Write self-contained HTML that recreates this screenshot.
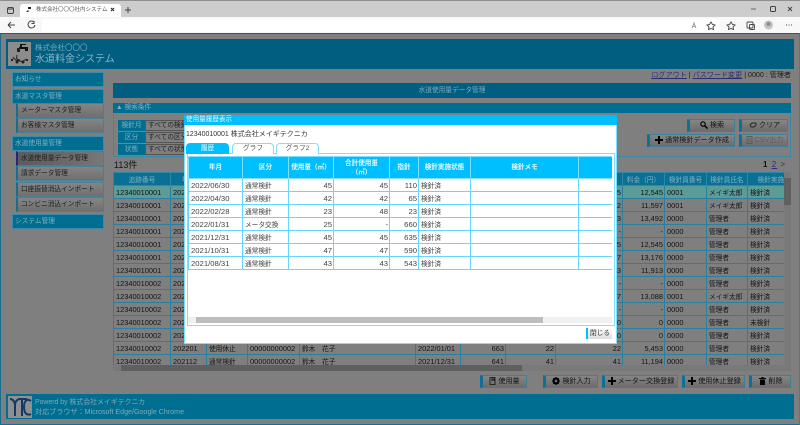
<!DOCTYPE html>
<html lang="ja"><head><meta charset="utf-8"><title>水道料金システム</title>
<style>
*{box-sizing:border-box}
html,body{margin:0;padding:0}
body{width:800px;height:425px;overflow:hidden;position:relative;background:#7f7f7f;font-family:"Liberation Sans","Noto Sans CJK JP",sans-serif;font-size:6.7px;color:#111}
.a{position:absolute;white-space:nowrap}
.m{background:#006e91;color:#84afbf;border:1px solid #3f8aa6;line-height:13px;padding-left:2px;font-size:6.7px}
.s{left:16px;width:88px;height:15px;background:linear-gradient(#858585,#6f6f6f);border:1px solid #4b8094;border-left:2px solid #1c6c8e;line-height:13px;padding-left:3px;color:#1c1c1c}
.b{height:13px;background:linear-gradient(#858585,#6c6c6c);border:1px solid #3f7f9a;border-left:3px solid #0f7096;line-height:11px;text-align:center;color:#151515;font-size:7.1px}
.b svg{vertical-align:-1.500px;margin-right:2px}
.lab{left:118px;width:27px;height:11px;background:#006e91;color:#84afbf;text-align:center;line-height:11px}
.inp{left:145px;width:42px;height:11px;background:#7f7f7f;border:1px solid #555;line-height:9px;padding-left:2px;overflow:hidden;color:#222}
table{border-collapse:collapse;table-layout:fixed}
#mt{position:absolute;left:0;top:0;width:694px}
#mt th{height:13px;background:#0a7096;color:#84afbf;font-weight:400;border:1px solid #2f86a6;font-size:6.7px;padding:0;overflow:hidden;white-space:nowrap}
#mt td{height:13px;border:1px solid #2c7f9f;font-size:7.4px;padding:0 1px 0 2px;overflow:hidden;white-space:nowrap;color:#141414}
#mt td:nth-child(3),#mt td:nth-child(5),#mt td:nth-child(12),#mt td:nth-child(13){font-size:6.7px}
#mt tr.h td{background:#5b9b98}
.r{text-align:right}
#ht{position:absolute;left:0;top:0;width:424px}
#ht th{height:22px;background:#00bfff;color:#e6f9ff;font-weight:700;font-size:6.6px;border:1px solid #7fdfff;line-height:9px;padding:0;white-space:nowrap}
#ht td{height:13px;border:1px solid #66d6ff;font-size:7.7px;color:#444;padding:0 1px 0 2px;overflow:hidden;white-space:nowrap}
#ht td:nth-child(2),#ht td:nth-child(6){font-size:6.7px}
.tab{top:143px;height:11px;border:1px solid #7fdfff;border-bottom:0;border-radius:4px 4px 0 0;background:#fff;color:#555;text-align:center;line-height:9px;font-size:6.7px}
a{color:#2c2c78;text-decoration:underline}
</style></head><body>

<!-- browser chrome -->
<div class="a" style="left:0;top:0;width:800px;height:17px;background:#cdcdcd;border-top:1px solid #8f8f8f"></div>
<div class="a" style="left:20px;top:4px;width:101px;height:13px;background:#fff;border-radius:3px 3px 0 0"></div>
<div class="a" style="left:36px;top:6px;width:72px;overflow:hidden;font-size:5.5px;line-height:8px;color:#555">株式会社〇〇〇社内システム／水道</div>
<svg class="a" style="left:0;top:0" width="800" height="17" viewBox="0 0 800 17" fill="none" stroke="#444">
<rect x="7.500" y="7.500" width="6" height="6" rx="1.500" stroke-width="1"/><path d="M8 9h5" stroke-width="1"/>
<path d="M26 12l2-2 1 1-1 1z" fill="#333" stroke="none"/><path d="M28 7h3v2h-3z" fill="#222" stroke="none"/>
<path d="M111 8l3 3M114 8l-3 3" stroke="#222" stroke-width="1"/>
<path d="M128 7v6M125 10h6" stroke-width="1"/>
<path d="M751 9h5" stroke="#666" stroke-width="1"/>
<rect x="770.500" y="6.500" width="5" height="5" rx="1" stroke-width="1"/>
<path d="M788 7l4 4M792 7l-4 4" stroke-width="1"/>
</svg>
<div class="a" style="left:0;top:17px;width:800px;height:16px;background:#f8f8f8"></div>
<div class="a" style="left:42px;top:19px;width:678px;height:13px;background:#fff"></div>
<svg class="a" style="left:0;top:17px" width="800" height="16" viewBox="0 0 800 16" fill="none" stroke="#444">
<path d="M8 8h7M8 8l3-3M8 8l3 3" stroke-width="1"/>
<path d="M34 5a3.500 3.500 0 1 0 1 3M34 4v2.500h-2.500" stroke-width="1"/>
<path d="M692 11l2-5 2 5M693 9.500h2" stroke="#888" stroke-width=".8"/>
<path d="M711 5l1.500 2.500 2.500.5-2 2 .5 2.500-2.500-1-2.500 1 .5-2.500-2-2 2.500-.5z" stroke-width=".9"/>
<path d="M731 5l1.500 2.500 2.500.5-2 2 .5 2.500-2.500-1-2.500 1 .5-2.500-2-2 2.500-.5z" stroke-width=".9"/>
<rect x="747" y="5" width="6" height="6" rx="1" stroke-width=".9"/><rect x="749.500" y="7.500" width="5" height="5" rx="1" stroke-width=".9"/>
<circle cx="768.500" cy="8" r="4.500" fill="#c3c3c3" stroke="none"/><circle cx="768.500" cy="7" r="2" fill="#8c8c8c" stroke="none"/>
<path d="M786 8h1M788.500 8h1M791 8h1" stroke-width="1"/>
</svg>
<div class="a" style="left:0;top:33px;width:800px;height:392px;background:#7f7f7f;border-top:1px solid #4f4f4f;border-left:1px solid #1c6c8e;border-bottom:1px solid #1c6c8e;border-right:1px solid #6a6a98"></div>

<!-- header -->
<div class="a" style="left:6px;top:39px;width:788px;height:30px;background:#005f80"></div>
<div class="a" style="left:8px;top:42px;width:23px;height:24px;background:#8c8c8c"></div>
<svg class="a" style="left:8px;top:42px" width="23" height="24" viewBox="0 0 23 24"><path d="M12 2h6v1h-4v2h6v4h-3V7h-6v-2h1z" fill="#111"/><path d="M9 6h3v4H9z" fill="#222"/><circle cx="4" cy="18" r="1.200" fill="#222"/><circle cx="9" cy="20" r="1.500" fill="#222"/><circle cx="15" cy="20" r="1.500" fill="#222"/><path d="M5 15c2 4 10 6 13 2M9 13c-1 3 0 5 3 5" stroke="#222" fill="none"/><circle cx="19" cy="18" r="1.100" fill="#222"/></svg>
<div class="a" style="left:35px;top:43px;font-size:7.5px;line-height:9px;color:#7fa9ba">株式会社〇〇〇</div>
<div class="a" style="left:35px;top:53px;font-size:10px;line-height:13px;color:#8ab3c3">水道料金システム</div>

<!-- sidebar -->
<div class="a m" style="left:12px;top:72px;width:92px;height:15px">お知らせ</div>
<div class="a m" style="left:12px;top:89px;width:92px;height:15px">水道マスタ管理</div>
<div class="a s" style="top:103px">メーターマスタ管理</div>
<div class="a s" style="top:118px">お客様マスタ管理</div>
<div class="a m" style="left:12px;top:136px;width:92px;height:15px">水道使用量管理</div>
<div class="a s" style="top:151px;background:linear-gradient(90deg,#5c5c5c,#6a6a6a 60%,#787878);border-left-color:#27277a">水道使用量データ管理</div>
<div class="a s" style="top:166px">請求データ管理</div>
<div class="a s" style="top:182px">口座振替消込インポート</div>
<div class="a s" style="top:197px">コンビニ消込インポート</div>
<div class="a m" style="left:12px;top:214px;width:92px;height:15px">システム管理</div>

<!-- top links -->
<div class="a" style="right:9px;top:71px;line-height:9px;color:#1a1a1a;font-size:7.1px"><a>ログアウト</a> | <a>パスワード変更</a> | 0000 : 管理者</div>

<!-- title -->
<div class="a" style="left:113px;top:83px;width:678px;height:15px;background:#005f80;color:#7fa9ba;text-align:center;line-height:15px">水道使用量データ管理</div>

<!-- search panel -->
<div class="a" style="left:113px;top:103px;width:678px;height:54px;border:1px solid #3f88a5"></div>
<div class="a" style="left:113px;top:103px;width:678px;height:10px;background:#006e91;color:#84afbf;line-height:10px;padding-left:3px">▲ 検索条件</div>
<div class="a lab" style="top:120px">検針月</div><div class="a inp" style="top:120px">すべての検針月</div>
<div class="a lab" style="top:132px">区分</div><div class="a inp" style="top:132px">すべての区分</div>
<div class="a lab" style="top:144px">状態</div><div class="a inp" style="top:144px">すべての状態</div>

<div class="a b" style="left:687px;top:119px;width:48px"><svg width="8" height="8" viewBox="0 0 8 8" fill="none" stroke="#000"><circle cx="3" cy="3" r="2.200" stroke-width="1.100"/><path d="M4.800 4.800L7.500 7.500" stroke-width="1.600"/></svg>検索</div>
<div class="a b" style="left:739px;top:119px;width:49px"><svg width="8" height="7" viewBox="0 0 8 7" fill="none" stroke="#222"><path d="M1 3l2-2h4v2l-2 2H2z" stroke-width=".9"/></svg>クリア</div>
<div class="a b" style="left:647px;top:134px;width:88px"><svg width="8" height="8" viewBox="0 0 8 8"><path d="M3 0h2v3h3v2H5v3H3V5H0V3h3z" fill="#000"/></svg>通常検針データ作成</div>
<div class="a b" style="left:739px;top:134px;width:49px;color:#5c5c5c"><svg width="7" height="8" viewBox="0 0 7 8" fill="none" stroke="#5c5c5c"><path d="M1 .5h5v7H1zM2 3h3M2 5h3" stroke-width=".9"/></svg>CSV出力</div>

<div class="a" style="left:114px;top:159px;font-size:9px;line-height:12px;color:#141414">113件</div>
<div class="a" style="left:763px;top:160px;font-size:8px;line-height:10px;color:#141414;letter-spacing:1px"><b>1</b> <u style="color:#2c2c78">2</u> <span style="color:#333">&gt;</span></div>

<!-- main table -->
<div class="a" style="left:113px;top:172px;width:671px;height:193px;overflow:hidden">
<table id="mt"><colgroup><col style="width:57px"><col style="width:36px"><col style="width:41px"><col style="width:52px"><col style="width:116px"><col style="width:45px"><col style="width:45px"><col style="width:50px"><col style="width:67px"><col style="width:42px"><col style="width:42px"><col style="width:41px"><col style="width:60px"></colgroup>
<tr><th>追跡番号</th><th>年月</th><th>区分</th><th>メーター番号</th><th>氏名</th><th>検針日</th><th>指針</th><th>使用量</th><th>合計使用量</th><th>料金（円）</th><th>検針員番号</th><th>検針員氏名</th><th>検針実施状態</th></tr>
<tr class="h"><td>12340010001</td><td>202206</td><td>通常検針</td><td></td><td></td><td></td><td class="r">110</td><td class="r">45</td><td class="r">45</td><td class="r">12,545</td><td>0001</td><td>メイギ太郎</td><td>検針済</td></tr>
<tr><td>12340010001</td><td>202204</td><td>通常検針</td><td></td><td></td><td></td><td class="r">65</td><td class="r">42</td><td class="r">42</td><td class="r">11,597</td><td>0001</td><td>メイギ太郎</td><td>検針済</td></tr>
<tr><td>12340010001</td><td>202202</td><td>通常検針</td><td></td><td></td><td></td><td class="r">23</td><td class="r">48</td><td class="r">23</td><td class="r">13,492</td><td>0000</td><td>管理者</td><td>検針済</td></tr>
<tr><td>12340010001</td><td>202201</td><td>メータ交換</td><td></td><td></td><td></td><td class="r">660</td><td class="r">25</td><td class="r">-</td><td class="r">-</td><td>0000</td><td>管理者</td><td>検針済</td></tr>
<tr><td>12340010001</td><td>202112</td><td>通常検針</td><td></td><td></td><td></td><td class="r">635</td><td class="r">45</td><td class="r">45</td><td class="r">12,545</td><td>0000</td><td>管理者</td><td>検針済</td></tr>
<tr><td>12340010001</td><td>202110</td><td>通常検針</td><td></td><td></td><td></td><td class="r">590</td><td class="r">47</td><td class="r">47</td><td class="r">13,176</td><td>0000</td><td>管理者</td><td>検針済</td></tr>
<tr><td>12340010001</td><td>202108</td><td>通常検針</td><td></td><td></td><td></td><td class="r">543</td><td class="r">43</td><td class="r">43</td><td class="r">11,913</td><td>0000</td><td>管理者</td><td>検針済</td></tr>
<tr><td>12340010002</td><td>202206</td><td>使用休止</td><td></td><td></td><td></td><td class="r">-</td><td class="r">-</td><td class="r">-</td><td class="r">-</td><td>0000</td><td>管理者</td><td>検針済</td></tr>
<tr><td>12340010002</td><td>202205</td><td>通常検針</td><td></td><td></td><td></td><td class="r">700</td><td class="r">37</td><td class="r">37</td><td class="r">13,088</td><td>0001</td><td>メイギ太郎</td><td>検針済</td></tr>
<tr><td>12340010002</td><td>202204</td><td>使用休止</td><td></td><td></td><td></td><td class="r">-</td><td class="r">-</td><td class="r">-</td><td class="r">-</td><td>0000</td><td>管理者</td><td>検針済</td></tr>
<tr><td>12340010002</td><td>202203</td><td>通常検針</td><td></td><td></td><td></td><td class="r">685</td><td class="r">0</td><td class="r">0</td><td class="r">0</td><td>0000</td><td>管理者</td><td>未検針</td></tr>
<tr><td>12340010002</td><td>202202</td><td>通常検針</td><td></td><td></td><td></td><td class="r">685</td><td class="r">0</td><td class="r">0</td><td class="r">0</td><td>0000</td><td>管理者</td><td>検針済</td></tr>
<tr><td>12340010002</td><td>202201</td><td>使用休止</td><td>00000000002</td><td>鈴木　花子</td><td>2022/01/01</td><td class="r">663</td><td class="r">22</td><td class="r">22</td><td class="r">5,453</td><td>0000</td><td>管理者</td><td>検針済</td></tr>
<tr><td>12340010002</td><td>202112</td><td>通常検針</td><td>00000000002</td><td>鈴木　花子</td><td>2021/12/31</td><td class="r">641</td><td class="r">41</td><td class="r">41</td><td class="r">11,194</td><td>0000</td><td>管理者</td><td>検針済</td></tr>
</table></div>
<div class="a" style="left:784px;top:172px;width:7px;height:193px;background:#797979"></div>
<div class="a" style="left:784px;top:178px;width:7px;height:27px;background:#606060"></div>
<div class="a" style="left:113px;top:365px;width:678px;height:6px;background:#797979"></div>
<div class="a" style="left:121px;top:365px;width:401px;height:6px;background:#5f5f5f"></div>

<!-- bottom buttons -->
<div class="a b" style="left:480px;top:375px;width:47px"><svg width="7" height="8" viewBox="0 0 7 8" fill="none" stroke="#111"><path d="M1 .5h5v7H1zM3 .5v3l1-1 1 1v-3" stroke-width=".8"/></svg>使用量</div>
<div class="a b" style="left:543px;top:375px;width:55px"><svg width="8" height="8" viewBox="0 0 8 8"><circle cx="4" cy="4" r="2.700" fill="none" stroke="#000" stroke-width="1.500"/><path d="M4 0v8M0 4h8M1.200 1.200l5.600 5.600M6.800 1.200L1.200 6.800" stroke="#000" stroke-width="1"/><circle cx="4" cy="4" r="1.100" fill="#777"/></svg>検針入力</div>
<div class="a b" style="left:602px;top:375px;width:76px"><svg width="8" height="8" viewBox="0 0 8 8"><path d="M3 0h2v3h3v2H5v3H3V5H0V3h3z" fill="#000"/></svg>メーター交換登録</div>
<div class="a b" style="left:682px;top:375px;width:63px"><svg width="8" height="8" viewBox="0 0 8 8"><path d="M3 0h2v3h3v2H5v3H3V5H0V3h3z" fill="#000"/></svg>使用休止登録</div>
<div class="a b" style="left:749px;top:375px;width:42px"><svg width="7" height="8" viewBox="0 0 7 8"><path d="M0 1h2.500V0h2v1H7v1H0zM1 2.500h5V8H1z" fill="#000"/></svg>削除</div>

<!-- footer -->
<div class="a" style="left:6px;top:394px;width:788px;height:25px;background:#006e91"></div>
<div class="a" style="left:8px;top:396px;width:24px;height:22px;background:#8f8f8f"></div>
<svg class="a" style="left:8px;top:396px" width="24" height="22" viewBox="0 0 24 22" fill="none" stroke="#123a66" stroke-width="2"><path d="M2 3c3 0 5 3 5 6v11M12 3c-3 0-5 3-5 6"/><path d="M11 3h8M14 3v17"/><path d="M23 5c-4-3-7 0-7 6s3 9 7 7"/></svg>
<div class="a" style="left:35px;top:398px;line-height:9px;color:#7fa9ba;font-size:6.9px">Powerd by 株式会社メイギテクニカ</div>
<div class="a" style="left:35px;top:408px;line-height:9px;color:#7fa9ba;font-size:7.1px">対応ブラウザ：Microsoft Edge/Google Chrome</div>

<!-- modal -->
<div class="a" style="left:184px;top:115px;width:433px;height:229px;background:#fff;border:1px solid #7fdfff"></div>
<div class="a" style="left:184px;top:115px;width:433px;height:10px;background:#00bfff;color:#e6f9ff;line-height:10px;padding-left:2px;font-size:6.6px">使用量履歴表示</div>
<div class="a" style="left:186px;top:130px;line-height:9px;color:#333;font-size:7px">12340010001 株式会社メイギテクニカ</div>
<div class="a" style="left:187px;top:153px;width:428px;height:173px;border:1px solid #7fdfff"></div>
<div class="a tab" style="left:186px;width:43px;background:#00bfff;border-color:#00bfff;color:#e6f9ff">履歴</div>
<div class="a tab" style="left:232px;width:42px">グラフ</div>
<div class="a tab" style="left:276px;width:43px">グラフ2</div>
<div class="a" style="left:188px;top:156px;width:424px;height:160px;overflow:hidden">
<table id="ht"><colgroup><col style="width:54px"><col style="width:46px"><col style="width:45px"><col style="width:56px"><col style="width:29px"><col style="width:52px"><col style="width:108px"><col style="width:34px"></colgroup>
<tr><th>年月</th><th>区分</th><th>使用量（㎥）</th><th>合計使用量<br>（㎥）</th><th>指針</th><th>検針実施状態</th><th>検針メモ</th><th></th></tr>
<tr><td>2022/06/30</td><td>通常検針</td><td class="r">45</td><td class="r">45</td><td class="r">110</td><td>検針済</td><td></td><td></td></tr>
<tr><td>2022/04/30</td><td>通常検針</td><td class="r">42</td><td class="r">42</td><td class="r">65</td><td>検針済</td><td></td><td></td></tr>
<tr><td>2022/02/28</td><td>通常検針</td><td class="r">23</td><td class="r">48</td><td class="r">23</td><td>検針済</td><td></td><td></td></tr>
<tr><td>2022/01/31</td><td>メータ交換</td><td class="r">25</td><td class="r">-</td><td class="r">660</td><td>検針済</td><td></td><td></td></tr>
<tr><td>2021/12/31</td><td>通常検針</td><td class="r">45</td><td class="r">45</td><td class="r">635</td><td>検針済</td><td></td><td></td></tr>
<tr><td>2021/10/31</td><td>通常検針</td><td class="r">47</td><td class="r">47</td><td class="r">590</td><td>検針済</td><td></td><td></td></tr>
<tr><td>2021/08/31</td><td>通常検針</td><td class="r">43</td><td class="r">43</td><td class="r">543</td><td>検針済</td><td></td><td></td></tr>
</table></div>
<div class="a" style="left:188px;top:317px;width:424px;height:6px;background:#f0f0f0"></div>
<div class="a" style="left:196px;top:317px;width:347px;height:6px;background:#bdbdbd"></div>
<div class="a" style="left:586px;top:328px;width:26px;height:11px;background:linear-gradient(#fff,#dcdcdc);border-left:2px solid #00bfff;text-align:center;line-height:11px;color:#333;font-size:6.7px">閉じる</div>
</body></html>
